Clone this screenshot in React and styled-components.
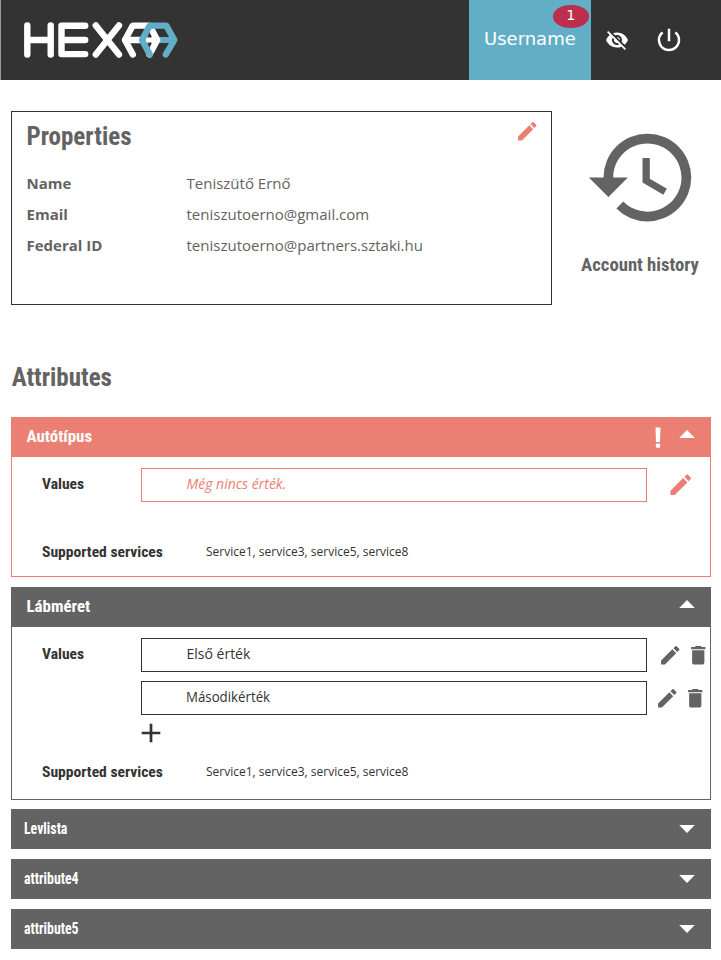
import React from "react";
import styled, { createGlobalStyle } from "styled-components";
import {
  MdAdd,
  MdDelete,
  MdEdit,
  MdHistory,
  MdPowerSettingsNew,
  MdVisibilityOff,
} from "react-icons/md";

const INK = "#333333";
const GREY = "#636363";
const CORAL = "#eb7f73";
const BLUE = "#62aec6";

const GlobalStyle = createGlobalStyle`
  * { box-sizing: border-box; }
  body { margin: 0; background: #fff; font-family: "Open Sans", sans-serif; color: ${INK}; }
  svg { display: block; flex: none; }
  h1, h2, p, dl, dt, dd { margin: 0; }
`;

const Page = styled.div`
  width: 721px;
  height: 960px;
  overflow: hidden;
`;

const Header = styled.header`
  display: flex;
  height: 80px;
  background: ${INK};
  border-left: 1px solid #999;
`;

const Logo = styled.svg`
  margin: 18px auto 0 19px;
`;

const UserTab = styled.div`
  position: relative;
  width: 122px;
  padding-left: 15px;
  background: ${BLUE};
  color: #fff;
  font: 18px/78px "DejaVu Sans", sans-serif;
`;

const Badge = styled.span`
  position: absolute;
  top: 4.5px;
  right: 2px;
  width: 36.5px;
  height: 23px;
  border-radius: 50%;
  background: #bb2f4c;
  font-size: 14.5px;
  line-height: 21px;
  text-align: center;
`;

const HeaderActions = styled.div`
  display: flex;
  align-items: center;
  gap: 25px;
  width: 130px;
  padding-left: 14px;
  color: #fff;
`;

const Top = styled.section`
  display: flex;
  padding: 31px 0 0 11px;
  color: ${GREY};
`;

const PropertiesCard = styled.div`
  width: 541px;
  height: 194px;
  padding: 7px 11.5px 0 14.5px;
  border: 1px solid ${INK};
`;

const CardHead = styled.div`
  display: flex;
  justify-content: space-between;
  margin-bottom: 13px;
`;

const Title = styled.h1`
  font: bold 25px/36px "Roboto Condensed", Roboto, sans-serif;
  color: ${GREY};
`;

const CoralIcon = styled.span`
  color: ${CORAL};
`;

const Fields = styled.dl`
  display: grid;
  grid-template-columns: 160px 1fr;
  grid-auto-rows: 31px;
  font-size: 15px;
  line-height: 31px;
`;

const FieldName = styled.dt`
  font-weight: bold;
`;

const History = styled.div`
  display: flex;
  flex-direction: column;
  align-items: center;
  width: 169px;
  padding: 8px 0 0 7px;
`;

const HistoryIcon = styled.div`
  margin-left: 4px;
`;

const HistoryLabel = styled.p`
  margin: 17px 0 0;
  font: bold 18.7px/24px "Roboto Condensed", Roboto, sans-serif;
  white-space: nowrap;
`;

const Attributes = styled.section`
  width: 711px;
  padding: 55px 0 0 11px;
`;

const AttributesTitle = styled(Title)`
  padding-left: 0.7px;
`;

const AttributeList = styled.div`
  display: flex;
  flex-direction: column;
  gap: 10px;
  margin-top: 21px;
`;

const Panel = styled.article`
  height: ${(p) => p.$height}px;
  border: 1px solid ${(p) => p.$tone};
`;

const PanelHead = styled.div`
  display: flex;
  align-items: center;
  height: 40px;
  margin: -1px -1px 0;
  padding: 0 16px 0 15.5px;
  background: ${(p) => p.$tone};
  color: #fff;
`;

const PanelName = styled.h2`
  margin-right: auto;
  padding-bottom: 2px;
  font: bold 16.9px/38px "Roboto Condensed", Roboto, sans-serif;
`;

const CollapsedBars = styled.div`
  display: flex;
  flex-direction: column;
  gap: 10px;
  margin-top: -1px;
`;

const CollapsedBar = styled(PanelHead)`
  margin: 0;
  padding-left: 12.5px;
`;

const CollapsedName = styled(PanelName)`
  padding-bottom: 0;
  font-size: 16px;
  transform: scaleX(0.865);
  transform-origin: left center;
`;

const Caret = styled.svg`
  margin: ${(p) => (p.$up ? "0 0 6px 18px" : "0")};
`;

const Mark = styled.svg`
  margin: 1px 0 0 0;
`;

const PanelBody = styled.div`
  display: grid;
  grid-template-columns: 99px 505.5px 1fr;
  padding: 11px 0 0 30px;
`;

const Label = styled.span`
  font: bold 15px/33px "Roboto Condensed", Roboto, sans-serif;
  transform: scaleX(1.04);
  transform-origin: left center;
`;

const ValueStack = styled.div`
  display: flex;
  flex-direction: column;
  gap: 9px;
`;

const ValueBox = styled.div`
  height: 34px;
  padding-left: 44.5px;
  border: 1px solid ${(p) => (p.$empty ? CORAL : INK)};
  color: ${(p) => (p.$empty ? CORAL : INK)};
  font-size: 14px;
  font-style: ${(p) => (p.$empty ? "italic" : "normal")};
  line-height: ${(p) => (p.$empty ? 29 : 30)}px;
`;

const NarrowText = styled.span`
  display: inline-block;
  margin-left: -0.3px;
  transform: scaleX(0.948);
  transform-origin: left center;
`;

const ActionStack = styled.div`
  display: flex;
  flex-direction: column;
  gap: 9px;
`;

const RowActions = styled.div`
  display: flex;
  align-items: center;
  gap: ${(p) => p.$gap || 0}px;
  height: 34px;
  padding-left: ${(p) => p.$indent}px;
  color: ${(p) => p.$tone};
`;

const AddIcon = styled.span`
  margin: -7px 0 0 -6px;
`;

const Services = styled.div`
  display: grid;
  grid-template-columns: 164px 1fr;
  margin-top: ${(p) => p.$gap}px;
  padding-left: 30px;
  font-size: 12px;
  line-height: 32px;
`;

function HexaaLogo() {
  return (
    <Logo width="162" height="44" viewBox="20 18 162 44" fill="none" strokeWidth="6.4" strokeLinecap="round" strokeLinejoin="round">
      <g stroke="#fff">
        <path d="M27.3 25.4V54.5M50.7 25.4V54.5M27.3 40H50.7" />
        <path d="M85.2 25.8H61.5V54.1H85.2M61.5 40H85.2" />
        <path d="M95.8 25.4L119 54.5M119 25.4L95.8 54.5" />
      </g>
      <path d="M143 40H173" stroke={BLUE} strokeWidth="6" />
      <path d="M132.8 54.5L125 40L132.8 25.6H149.5L157.2 40L149.5 54.5M125 40H157" stroke="#fff" />
      <path d="M149.5 33L147 39L149.5 47L152.5 40Z" fill={INK} />
      <path d="M147.5 40H153" stroke="#fff" strokeWidth="5" />
      <path d="M149.8 54.5L142 40L149.8 25.6H166.3L174.3 40L165.8 54.5" stroke={BLUE} />
    </Logo>
  );
}

function CaretIcon({ up }) {
  return (
    <Caret $up={up} width="16" height="8" viewBox="0 0 16 8">
      <path d={up ? "M0.2 8L8 0L15.8 8Z" : "M0.2 0H15.8L8 8Z"} fill="#fff" />
    </Caret>
  );
}

function ExclamationMark() {
  return (
    <Mark width="6" height="22" viewBox="0 0 6 22" fill="#fff">
      <path d="M0.5 0.5H5.5L5 15H1Z" />
      <circle cx="3" cy="18.7" r="2.4" />
    </Mark>
  );
}

const SERVICES = "Service1, service3, service5, service8";
const PROFILE = [
  ["Name", "Teniszütő Ernő"],
  ["Email", "teniszutoerno@gmail.com"],
  ["Federal ID", "teniszutoerno@partners.sztaki.hu"],
];
const COLLAPSED = ["Levlista", "attribute4", "attribute5"];

export default function App() {
  return (
    <Page>
      <GlobalStyle />
      <Header>
        <HexaaLogo />
        <UserTab>
          Username
          <Badge>1</Badge>
        </UserTab>
        <HeaderActions>
          <MdVisibilityOff size={24} />
          <MdPowerSettingsNew size={30} />
        </HeaderActions>
      </Header>

      <Top>
        <PropertiesCard>
          <CardHead>
            <Title>Properties</Title>
            <CoralIcon><MdEdit size={24.5} /></CoralIcon>
          </CardHead>
          <Fields>
            {PROFILE.map(([name, value]) => (
              <React.Fragment key={name}>
                <FieldName>{name}</FieldName>
                <dd>{value}</dd>
              </React.Fragment>
            ))}
          </Fields>
        </PropertiesCard>
        <History>
          <HistoryIcon><MdHistory size={117} /></HistoryIcon>
          <HistoryLabel>Account history</HistoryLabel>
        </History>
      </Top>

      <Attributes>
        <AttributesTitle>Attributes</AttributesTitle>
        <AttributeList>
          <Panel $tone={CORAL} $height={160}>
            <PanelHead $tone={CORAL}>
              <PanelName>Autótípus</PanelName>
              <ExclamationMark />
              <CaretIcon up />
            </PanelHead>
            <PanelBody>
              <Label>Values</Label>
              <ValueBox $empty>Még nincs érték.</ValueBox>
              <RowActions $indent={20} $tone={CORAL}><MdEdit size={27.5} /></RowActions>
            </PanelBody>
            <Services $gap={34}>
              <Label>Supported services</Label>
              <span>{SERVICES}</span>
            </Services>
          </Panel>

          <Panel $tone={GREY} $height={213}>
            <PanelHead $tone={GREY}>
              <PanelName>Lábméret</PanelName>
              <CaretIcon up />
            </PanelHead>
            <PanelBody>
              <Label>Values</Label>
              <ValueStack>
                <ValueBox>Első érték</ValueBox>
                <ValueBox><NarrowText>Másodikérték</NarrowText></ValueBox>
                <AddIcon><MdAdd size={32} /></AddIcon>
              </ValueStack>
              <ActionStack>
                <RowActions $indent={11} $gap={4} $tone={GREY}>
                  <MdEdit size={24.5} />
                  <MdDelete size={24.5} />
                </RowActions>
                <RowActions $indent={8.8} $gap={3.3} $tone={GREY}>
                  <MdEdit size={24.5} />
                  <MdDelete size={24.5} />
                </RowActions>
              </ActionStack>
            </PanelBody>
            <Services $gap={7}>
              <Label>Supported services</Label>
              <span>{SERVICES}</span>
            </Services>
          </Panel>

          <CollapsedBars>
            {COLLAPSED.map((name) => (
              <CollapsedBar key={name} $tone={GREY}>
                <CollapsedName>{name}</CollapsedName>
                <CaretIcon />
              </CollapsedBar>
            ))}
          </CollapsedBars>
        </AttributeList>
      </Attributes>
    </Page>
  );
}
